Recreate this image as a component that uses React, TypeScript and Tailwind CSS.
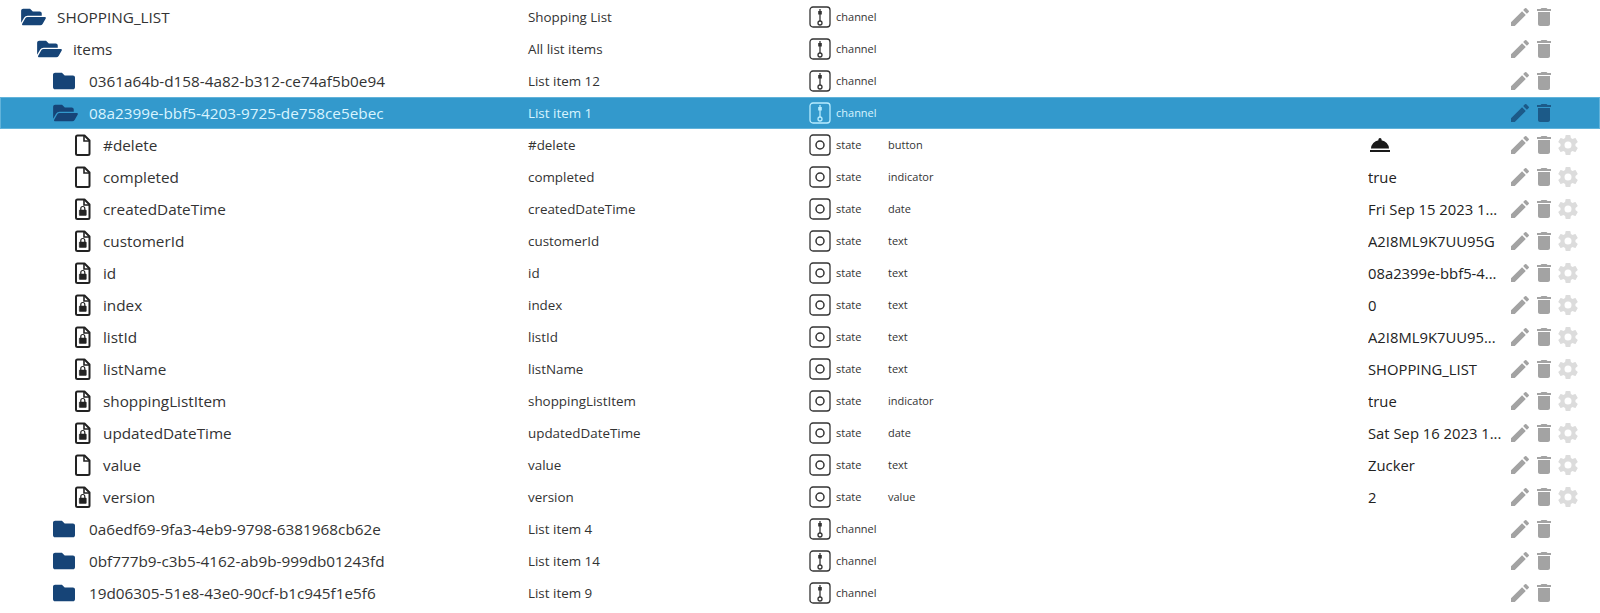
import type { ReactNode } from 'react';

type Row = {
  id: string;
  name: string;
  depth: number;
  icon: 'open' | 'closed' | 'file' | 'lock';
  role?: string;
  value?: ReactNode;
  selected?: boolean;
};

const rows: Row[] = [
  { id: 'SHOPPING_LIST', name: 'Shopping List', depth: 0, icon: 'open' },
  { id: 'items', name: 'All list items', depth: 1, icon: 'open' },
  { id: '0361a64b-d158-4a82-b312-ce74af5b0e94', name: 'List item 12', depth: 2, icon: 'closed' },
  { id: '08a2399e-bbf5-4203-9725-de758ce5ebec', name: 'List item 1', depth: 2, icon: 'open', selected: true },
  { id: '#delete', name: '#delete', depth: 3, icon: 'file', role: 'button', value: <BellIcon /> },
  { id: 'completed', name: 'completed', depth: 3, icon: 'file', role: 'indicator', value: 'true' },
  { id: 'createdDateTime', name: 'createdDateTime', depth: 3, icon: 'lock', role: 'date', value: 'Fri Sep 15 2023 1...' },
  { id: 'customerId', name: 'customerId', depth: 3, icon: 'lock', role: 'text', value: 'A2I8ML9K7UU95G' },
  { id: 'id', name: 'id', depth: 3, icon: 'lock', role: 'text', value: '08a2399e-bbf5-4...' },
  { id: 'index', name: 'index', depth: 3, icon: 'lock', role: 'text', value: '0' },
  { id: 'listId', name: 'listId', depth: 3, icon: 'lock', role: 'text', value: 'A2I8ML9K7UU95...' },
  { id: 'listName', name: 'listName', depth: 3, icon: 'lock', role: 'text', value: 'SHOPPING_LIST' },
  { id: 'shoppingListItem', name: 'shoppingListItem', depth: 3, icon: 'lock', role: 'indicator', value: 'true' },
  { id: 'updatedDateTime', name: 'updatedDateTime', depth: 3, icon: 'lock', role: 'date', value: 'Sat Sep 16 2023 1...' },
  { id: 'value', name: 'value', depth: 3, icon: 'file', role: 'text', value: 'Zucker' },
  { id: 'version', name: 'version', depth: 3, icon: 'lock', role: 'value', value: '2' },
  { id: '0a6edf69-9fa3-4eb9-9798-6381968cb62e', name: 'List item 4', depth: 2, icon: 'closed' },
  { id: '0bf777b9-c3b5-4162-ab9b-999db01243fd', name: 'List item 14', depth: 2, icon: 'closed' },
  { id: '19d06305-51e8-43e0-90cf-b1c945f1e5f6', name: 'List item 9', depth: 2, icon: 'closed' },
];

// indent per tree level, the name column is fixed
const indent = ['pl-[21px]', 'pl-[37px]', 'pl-[53px]', 'pl-[71px]'];

function BellIcon() {
  return (
    <svg viewBox="0 0 24 24" className="w-[24px] h-[24px] fill-[#1a1a1a]">
      <path d="M12 5a1.600 1.600 0 0 1 1.500 2.200A9 9 0 0 1 21 15.500H3a9 9 0 0 1 7.500-8.300A1.600 1.600 0 0 1 12 5zM2 17h20v2H2z" />
    </svg>
  );
}

function TreeIcon({ type }: { type: Row['icon'] }) {
  if (type === 'open') {
    return (
      <svg viewBox="0 0 576 512" className="w-[25px] h-[22px] fill-[#164477]">
        <path d="M572.694 292.093L500.27 416.248A63.997 63.997 0 0 1 444.989 448H45.025c-18.523 0-30.064-20.093-20.731-36.093l72.424-124.155A64 64 0 0 1 152 256h399.964c18.523 0 30.064 20.093 20.73 36.093zM152 224h328v-48c0-26.51-21.49-48-48-48H272l-64-64H48C21.49 64 0 85.49 0 112v278.046l69.077-118.418C86.214 242.25 117.989 224 152 224z" />
      </svg>
    );
  }
  if (type === 'closed') {
    return (
      <svg viewBox="0 0 512 512" className="w-[22px] h-[22px] fill-[#164477]">
        <path d="M464 128H272l-64-64H48C21.500 64 0 85.500 0 112v288c0 26.500 21.500 48 48 48h416c26.500 0 48-21.500 48-48V176c0-26.500-21.500-48-48-48z" />
      </svg>
    );
  }
  return (
    <svg viewBox="0 0 24 24" className="w-[24px] h-[24px] fill-none stroke-[#222222]" strokeWidth="2">
      <path d="M6.500 2.500h7l5 5v13a1.500 1.500 0 0 1-1.500 1.500H6.500A1.500 1.500 0 0 1 5 20.500V4a1.500 1.500 0 0 1 1.500-1.500z" strokeLinejoin="round" />
      <path d="M13 2.500v5.500h5.500" strokeWidth="1.600" />
      {type === 'lock' && (
        <>
          <rect x="8.300" y="13" width="7" height="5.500" rx="0.600" className="fill-[#222222]" strokeWidth="0.500" />
          <path d="M9.800 13v-1.500a2 2 0 0 1 4 0v1.500" strokeWidth="1.200" />
        </>
      )}
    </svg>
  );
}

function TypeIcon({ channel, selected }: { channel: boolean; selected?: boolean }) {
  const stroke = selected ? 'stroke-[#b8ecff]' : 'stroke-[#333333]';
  return (
    <svg viewBox="0 0 22 22" className={`w-[22px] h-[22px] fill-none ${stroke}`} strokeWidth="1.300">
      <rect x="1" y="1" width="20" height="20" rx="3" />
      {channel ? (
        <>
          <path d="M11 3v12" />
          <rect x="9.200" y="5" width="3.600" height="3.500" className={selected ? 'fill-[#b8ecff]' : 'fill-[#333333]'} stroke="none" />
          <circle cx="11" cy="17" r="2" />
        </>
      ) : (
        <circle cx="11" cy="11" r="4" strokeWidth="1.500" />
      )}
    </svg>
  );
}

function PencilIcon({ className }: { className: string }) {
  return (
    <svg viewBox="0 0 24 24" className={`w-[24px] h-[24px] ${className}`}>
      <path d="M3 17.250V21h3.750L17.810 9.940l-3.750-3.750L3 17.250zM20.710 7.040a1 1 0 0 0 0-1.410l-2.340-2.340a1 1 0 0 0-1.410 0l-1.830 1.830 3.750 3.750 1.830-1.830z" />
    </svg>
  );
}

function TrashIcon({ className }: { className: string }) {
  return (
    <svg viewBox="0 0 24 24" className={`w-[24px] h-[24px] ${className}`}>
      <path d="M6 19c0 1.100.9 2 2 2h8c1.100 0 2-.9 2-2V7H6v12zM19 4h-3.500l-1-1h-5l-1 1H5v2h14V4z" />
    </svg>
  );
}

function GearIcon() {
  return (
    <svg viewBox="0 0 24 24" className="w-[24px] h-[24px] fill-[#dcdcdc]">
      <path d="M19.430 12.980c.04-.32.07-.64.07-.98s-.03-.66-.07-.98l2.110-1.650a.5.500 0 0 0 .12-.64l-2-3.460a.5.500 0 0 0-.61-.22l-2.490 1a7.300 7.300 0 0 0-1.690-.98l-.38-2.650A.49.490 0 0 0 14 2h-4a.49.490 0 0 0-.49.420l-.38 2.650c-.61.250-1.170.590-1.690.98l-2.490-1a.5.500 0 0 0-.61.220l-2 3.460a.49.490 0 0 0 .12.640l2.110 1.650c-.04.320-.07.650-.07.980s.03.660.07.980l-2.110 1.650a.5.500 0 0 0-.12.640l2 3.460c.12.220.39.300.61.220l2.490-1c.52.400 1.080.730 1.690.98l.38 2.650c.03.240.24.420.49.420h4c.25 0 .46-.18.49-.42l.38-2.650c.61-.25 1.170-.59 1.690-.98l2.490 1c.23.090.49 0 .61-.22l2-3.460a.5.500 0 0 0-.12-.64l-2.110-1.650zM12 15.500a3.500 3.500 0 1 1 0-7 3.500 3.500 0 0 1 0 7z" />
    </svg>
  );
}

function TreeRow({ row }: { row: Row }) {
  const isState = row.role !== undefined;
  const small = row.selected ? 'text-[#d8f4ff]' : 'text-[#333333]';
  const isFile = row.icon === 'file' || row.icon === 'lock';
  return (
    <div
      className={`flex items-center h-[32px] ${row.selected ? 'bg-[#3399cc] shadow-[inset_0_0_0_1px_#62b3da]' : ''}`}
    >
      <div className={`flex items-center w-[528px] shrink-0 ${indent[row.depth]}`}>
        <span className={`shrink-0 flex ${isFile ? 'w-[32px]' : 'w-[36px]'}`}>
          <TreeIcon type={row.icon} />
        </span>
        <span className={`text-[15.300px] whitespace-nowrap ${small}`}>{row.id}</span>
      </div>
      <div className={`w-[281px] shrink-0 text-[13.400px] ${small}`}>{row.name}</div>
      <div className="w-[27px] shrink-0 flex">
        <TypeIcon channel={!isState} selected={row.selected} />
      </div>
      <div className={`w-[52px] shrink-0 text-[11px] ${small}`}>{isState ? 'state' : 'channel'}</div>
      <div className={`w-[480px] shrink-0 text-[11px] ${small}`}>{row.role}</div>
      <div className="w-[140px] shrink-0 text-[14.800px] text-[#222222] whitespace-nowrap flex items-center overflow-hidden">{row.value}</div>
      <div className="flex items-center">
        <PencilIcon className={row.selected ? 'fill-[#1c5a88]' : 'fill-[#a3a3a3]'} />
        <TrashIcon className={row.selected ? 'fill-[#1c5a88]' : 'fill-[#a3a3a3]'} />
        {isState && <GearIcon />}
      </div>
    </div>
  );
}

export default function App() {
  return (
    <div className="w-[1600px] h-[613px] bg-white overflow-hidden pt-[1px] font-['Open_Sans','Noto_Sans',sans-serif]">
      {rows.map((row) => (
        <TreeRow key={row.id} row={row} />
      ))}
    </div>
  );
}
